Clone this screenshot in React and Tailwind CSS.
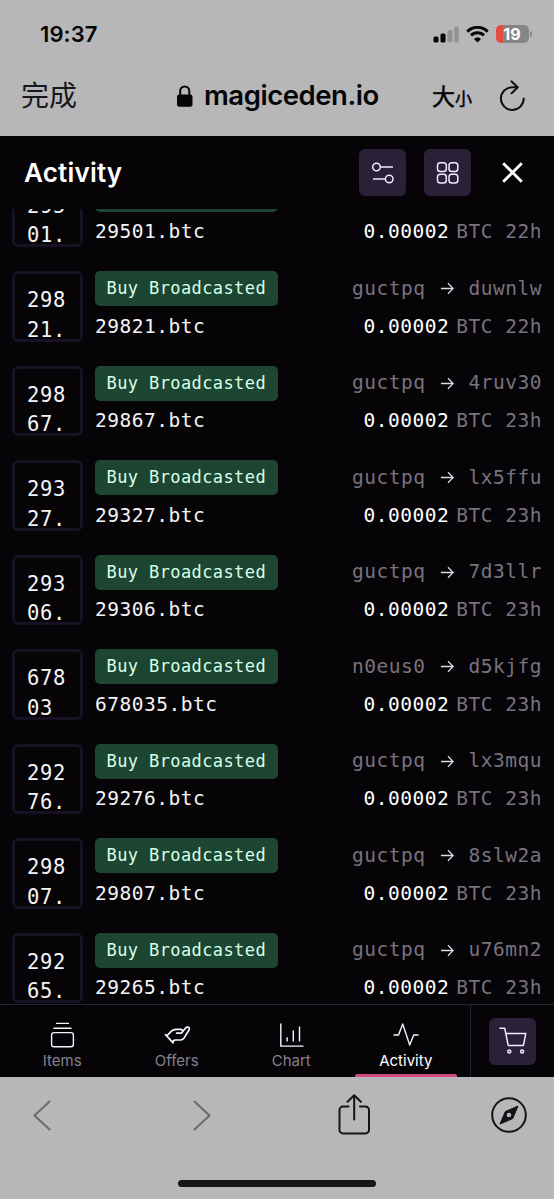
import React from 'react';

const activities = [
  { thumb: ['295', '01.'], name: '29501.btc', from: 'guctpq', to: 'k4x9ap', age: '22h' },
  { thumb: ['298', '21.'], name: '29821.btc', from: 'guctpq', to: 'duwnlw', age: '22h' },
  { thumb: ['298', '67.'], name: '29867.btc', from: 'guctpq', to: '4ruv30', age: '23h' },
  { thumb: ['293', '27.'], name: '29327.btc', from: 'guctpq', to: 'lx5ffu', age: '23h' },
  { thumb: ['293', '06.'], name: '29306.btc', from: 'guctpq', to: '7d3llr', age: '23h' },
  { thumb: ['678', '03'], name: '678035.btc', from: 'n0eus0', to: 'd5kjfg', age: '23h' },
  { thumb: ['292', '76.'], name: '29276.btc', from: 'guctpq', to: 'lx3mqu', age: '23h' },
  { thumb: ['298', '07.'], name: '29807.btc', from: 'guctpq', to: '8slw2a', age: '23h' },
  { thumb: ['292', '65.'], name: '29265.btc', from: 'guctpq', to: 'u76mn2', age: '23h' },
];

function StatusBar() {
  return (
    <div className="flex h-[68px] items-center justify-between pr-[22px] pl-[40px]">
      <span className="text-[22px] leading-none font-semibold tracking-[0.1px]">19:37</span>
      <div className="flex items-center">
        <svg width="26" height="17" viewBox="0 0 26 17">
          <rect x="0.5" y="10.5" width="5" height="6" rx="1.5" fill="#050507" />
          <rect x="7.5" y="7.5" width="5" height="9" rx="1.5" fill="#050507" />
          <rect x="14.5" y="4" width="5" height="12.5" rx="1.5" fill="#929294" />
          <rect x="21.3" y="0.5" width="4.5" height="16" rx="1.5" fill="#929294" />
        </svg>
        <svg className="ml-[7px]" width="23" height="17" viewBox="0 0 23 17" fill="none" stroke="#050507">
          <path d="M1.3 5.6a14.4 14.4 0 0 1 20.4 0" strokeWidth="3" />
          <path d="M5 9.4a9.2 9.2 0 0 1 13 0" strokeWidth="3" />
          <path d="M11.5 16.5 8 12.9a5 5 0 0 1 7 0Z" fill="#050507" stroke="none" />
        </svg>
        <div className="ml-[7px] flex h-[18px] w-[33px] items-center justify-center overflow-hidden rounded-[5px] bg-[linear-gradient(90deg,#e84c3d_7px,#858587_7px)] text-[16px] leading-none font-bold text-white">19</div>
        <div className="ml-[1.5px] h-[6px] w-[2px] rounded-r-full bg-[#858587]" />
      </div>
    </div>
  );
}

function AddressBar() {
  return (
    <div className="flex h-[68px] items-center pb-[13px] pl-[21px]">
      <span className="w-[155px] pb-[3px] font-['Noto_Sans_CJK_SC',sans-serif] text-[28px] leading-none font-normal text-[#15171b]">完成</span>
      <svg width="18" height="22" viewBox="0 0 18 22">
        <rect x="1" y="9.5" width="15.5" height="12.3" rx="2.2" fill="#050507" />
        <path d="M4.2 10V6a4.55 4.55 0 0 1 9.1 0v4" fill="none" stroke="#050507" strokeWidth="2" />
      </svg>
      <span className="ml-[10px] w-[228px] text-[27.5px] leading-none font-semibold tracking-[-0.45px] whitespace-nowrap">magiceden.io</span>
      <span className="flex w-[66px] items-baseline font-['Noto_Sans_CJK_SC',sans-serif] leading-none font-normal [-webkit-text-stroke:0.5px_#050507]">
        <span className="text-[23px]">大</span>
        <span className="text-[17px]">小</span>
      </span>
      <svg width="28" height="32" viewBox="0 0 28 32" fill="none" stroke="#101014" strokeWidth="2" strokeLinecap="round" strokeLinejoin="round">
        <path d="M18.5 7.2h-4.2A11.4 11.4 0 1 0 25.7 18.6" />
        <path d="m13.6 1.4 6.2 5.8-6.2 6" />
      </svg>
    </div>
  );
}

function Header() {
  return (
    <div className="flex h-[73px] items-center pl-[24px] text-white">
      <h1 className="w-[335px] text-[26px] leading-none font-semibold tracking-[0.2px]">Activity</h1>
      <button className="flex size-[47px] items-center justify-center rounded-[6px] bg-[#2a2037]">
        <svg width="24" height="24" viewBox="0 0 24 24" fill="none" stroke="#f4e9ff" strokeWidth="1.5">
          <circle cx="5.5" cy="6" r="3.8" />
          <path d="M9.3 6H22M2 18h12.5" />
          <circle cx="18.2" cy="18" r="3.8" />
        </svg>
      </button>
      <button className="ml-[18px] flex size-[47px] items-center justify-center rounded-[6px] bg-[#2a2037]">
        <svg width="24" height="24" viewBox="0 0 24 24" fill="none" stroke="#f4e9ff" strokeWidth="1.5">
          <rect x="1.5" y="1.8" width="8.8" height="8.8" rx="2.8" />
          <rect x="13" y="1.8" width="8.8" height="8.8" rx="2.8" />
          <rect x="1.5" y="13.3" width="8.8" height="8.8" rx="2.8" />
          <rect x="13" y="13.3" width="8.8" height="8.8" rx="2.8" />
        </svg>
      </button>
      <svg className="ml-[31px]" width="21" height="21" viewBox="0 0 21 21" stroke="#fff" strokeWidth="2.8">
        <path d="m1.2 1.2 18.6 18.6M19.8 1.2 1.2 19.8" />
      </svg>
    </div>
  );
}

function ActivityRow({ item }) {
  return (
    <div className="flex h-[70.5px] pr-[12px] pl-[12px]">
      <div className="h-[70.5px] w-[70.5px] shrink-0 overflow-hidden rounded-[6px] border-[3px] border-[#171124] pt-[12px] pl-[12px] text-[20.5px] leading-[29.5px] tracking-[0.7px] text-[#f4f4f6]">
        {item.thumb.map((line) => <div key={line}>{line}</div>)}
      </div>
      <div className="ml-[12.5px] flex flex-col items-start">
        <span className="flex h-[35px] w-[183px] items-center rounded-[5px] bg-[#1c4532] pt-px pl-[11.5px] text-[17px] tracking-[0.4px] whitespace-nowrap text-[#d9ffe8]">Buy Broadcasted</span>
        <span className="mt-[6.5px] text-[19.5px] leading-[28px] tracking-[0.5px] text-[#f4f4f6]">{item.name}</span>
      </div>
      <div className="ml-auto flex flex-col items-end text-[19.5px] tracking-[0.5px] text-[#77737d]">
        <div className="flex h-[35px] items-center">
          <span>{item.from}</span>
          <svg className="mx-[15px]" width="13" height="13" viewBox="0 0 13 13" fill="none" stroke="#ddd9e3" strokeWidth="1.3">
            <path d="M0 6.5h12M7 1.2l5.2 5.3L7 11.8" />
          </svg>
          <span>{item.to}</span>
        </div>
        <div className="mt-[6.5px] flex leading-[28px]">
          <span className="text-white">0.00002</span>
          <span className="ml-[7px]">BTC {item.age}</span>
        </div>
      </div>
    </div>
  );
}

function NavItem({ label, active, children }) {
  return (
    <div className="flex w-[114.5px] flex-col items-center">
      <svg className="mt-[17px]" width="26" height="26" viewBox="0 0 26 26" fill="none" stroke="#f6f3fa" strokeWidth="1.4">
        {children}
      </svg>
      <span className={active ? 'mt-[5px] text-[15px] leading-[16px] text-white' : 'mt-[5px] text-[15px] leading-[16px] text-[#85818c]'}>{label}</span>
      {active && <div className="mt-auto h-[3px] w-[102px] rounded-t-[2px] bg-[#ce4b7e]" />}
    </div>
  );
}

function BottomNav() {
  return (
    <nav className="flex h-[73px] border-t border-[#292237] pl-[5px]">
      <NavItem label="Items">
        <path d="M7 1.4h13M4.5 6.2h18" />
        <rect x="2.6" y="10.6" width="21.8" height="14.2" rx="2.5" />
      </NavItem>
      <NavItem label="Offers">
        <path d="m1.5 12.6 7.6 8.2M2.8 13.8l4.6-4.6C8.6 8 10 7.4 12 7.4h4.6c2.6.1 2.6 3.5 0 3.7h-4M18.4 10l3.2-4c1.5-1.9 4.6-.6 3.6 1.8l-5.3 8.4c-.9 1.3-1.8 1.8-3.4 1.8h-5.8l-2.4 2" strokeWidth="1.7" strokeLinejoin="round" strokeLinecap="round" />
      </NavItem>
      <NavItem label="Chart">
        <path d="M2.8 1.5v22.6h22.7M9.1 19.6v-4.3M15.3 19.6v-11M21.5 19.6V4.6" />
      </NavItem>
      <NavItem label="Activity" active>
        <path d="M.5 13h5l4.2-11 7 21 4-10h4.8" strokeLinejoin="round" />
      </NavItem>
      <div className="ml-[7px] flex flex-1 items-center justify-center border-l border-[#292237]">
        <button className="flex size-[47px] items-center justify-center rounded-[6px] bg-[#2a2037]">
          <svg width="28" height="28" viewBox="0 0 28 28" fill="none" stroke="#f4e9ff" strokeWidth="1.5" strokeLinejoin="round">
            <path d="M.5 1.2h5.2l3.5 17.2h15.2l2.4-12H6.8" />
            <circle cx="10.3" cy="24.5" r="1.5" />
            <circle cx="23.1" cy="24.5" r="1.5" />
          </svg>
        </button>
      </div>
    </nav>
  );
}

function BrowserToolbar() {
  return (
    <div className="flex h-[122px] flex-col items-center">
      <div className="flex h-[76px] w-full items-center pl-[33px]">
        <svg width="18" height="31" viewBox="0 0 18 31" fill="none" stroke="#6c6c6e" strokeWidth="2.1" strokeLinecap="round" strokeLinejoin="round">
          <path d="M16.5 1.5 1.5 15.5l15 14" />
        </svg>
        <svg className="ml-[141.5px]" width="18" height="31" viewBox="0 0 18 31" fill="none" stroke="#6c6c6e" strokeWidth="2.1" strokeLinecap="round" strokeLinejoin="round">
          <path d="m1.5 1.5 15 14-15 14" />
        </svg>
        <svg className="ml-[127.5px]" width="32" height="42" viewBox="0 0 32 42" fill="none" stroke="#131417" strokeWidth="2" strokeLinecap="round" strokeLinejoin="round">
          <path d="M10.5 12.6H5a3.5 3.5 0 0 0-3.5 3.5v19.8a3.5 3.5 0 0 0 3.5 3.5h22.5a3.5 3.5 0 0 0 3.5-3.5V16.1a3.5 3.5 0 0 0-3.5-3.5H22" />
          <path d="M16.2 25.5V1.2M9.5 7.7l6.7-6.5 6.7 6.5" />
        </svg>
        <svg className="ml-[121px]" width="36" height="36" viewBox="0 0 36 36">
          <circle cx="18" cy="18" r="16.8" fill="none" stroke="#131417" strokeWidth="2" />
          <path d="M27 9 14.3 14.6 9 27l12.7-5.4Z" fill="#131417" stroke="#131417" strokeLinejoin="round" />
          <circle cx="18" cy="18" r="2.3" fill="#b7b7b9" />
        </svg>
      </div>
      <div className="mt-[27px] h-[7px] w-[198px] rounded-full bg-[#17171a]" />
    </div>
  );
}

export default function App() {
  return (
    <div className="h-[1199px] w-[554px] overflow-hidden bg-[#b7b7b9] font-['Inter',sans-serif] text-[#050507]">
      <StatusBar />
      <AddressBar />
      <main className="h-[941px] bg-[#070408]">
        <Header />
        <div className="h-[795px] overflow-hidden font-['DejaVu_Sans_Mono',monospace]">
          <div className="-mt-[32.5px] flex flex-col gap-[24px]">
            {activities.map((item) => <ActivityRow key={item.name} item={item} />)}
          </div>
        </div>
        <BottomNav />
      </main>
      <BrowserToolbar />
    </div>
  );
}
